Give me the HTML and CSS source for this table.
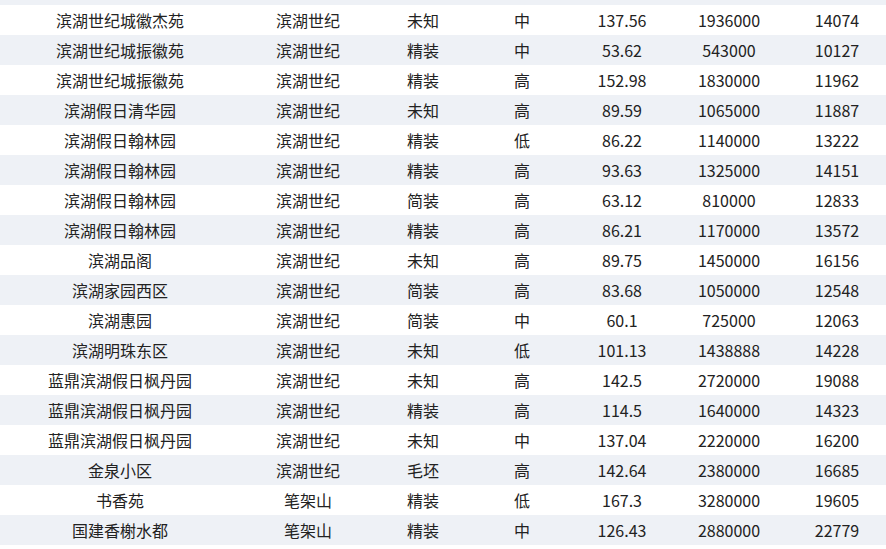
FILE: index.html
```html
<!DOCTYPE html>
<html lang="zh">
<head>
<meta charset="utf-8">
<link rel="stylesheet" href="styles.css">
</head>
<body>
<div class="top-strip"></div>
<table class="data">
<colgroup>
<col class="c1"><col class="c2"><col class="c3"><col class="c4"><col class="c5"><col class="c6"><col class="c7">
</colgroup>
<tbody>
<tr><td>滨湖世纪城徽杰苑</td><td>滨湖世纪</td><td>未知</td><td>中</td><td>137.56</td><td>1936000</td><td>14074</td></tr>
<tr><td>滨湖世纪城振徽苑</td><td>滨湖世纪</td><td>精装</td><td>中</td><td>53.62</td><td>543000</td><td>10127</td></tr>
<tr><td>滨湖世纪城振徽苑</td><td>滨湖世纪</td><td>精装</td><td>高</td><td>152.98</td><td>1830000</td><td>11962</td></tr>
<tr><td>滨湖假日清华园</td><td>滨湖世纪</td><td>未知</td><td>高</td><td>89.59</td><td>1065000</td><td>11887</td></tr>
<tr><td>滨湖假日翰林园</td><td>滨湖世纪</td><td>精装</td><td>低</td><td>86.22</td><td>1140000</td><td>13222</td></tr>
<tr><td>滨湖假日翰林园</td><td>滨湖世纪</td><td>精装</td><td>高</td><td>93.63</td><td>1325000</td><td>14151</td></tr>
<tr><td>滨湖假日翰林园</td><td>滨湖世纪</td><td>简装</td><td>高</td><td>63.12</td><td>810000</td><td>12833</td></tr>
<tr><td>滨湖假日翰林园</td><td>滨湖世纪</td><td>精装</td><td>高</td><td>86.21</td><td>1170000</td><td>13572</td></tr>
<tr><td>滨湖品阁</td><td>滨湖世纪</td><td>未知</td><td>高</td><td>89.75</td><td>1450000</td><td>16156</td></tr>
<tr><td>滨湖家园西区</td><td>滨湖世纪</td><td>简装</td><td>高</td><td>83.68</td><td>1050000</td><td>12548</td></tr>
<tr><td>滨湖惠园</td><td>滨湖世纪</td><td>简装</td><td>中</td><td>60.1</td><td>725000</td><td>12063</td></tr>
<tr><td>滨湖明珠东区</td><td>滨湖世纪</td><td>未知</td><td>低</td><td>101.13</td><td>1438888</td><td>14228</td></tr>
<tr><td>蓝鼎滨湖假日枫丹园</td><td>滨湖世纪</td><td>未知</td><td>高</td><td>142.5</td><td>2720000</td><td>19088</td></tr>
<tr><td>蓝鼎滨湖假日枫丹园</td><td>滨湖世纪</td><td>精装</td><td>高</td><td>114.5</td><td>1640000</td><td>14323</td></tr>
<tr><td>蓝鼎滨湖假日枫丹园</td><td>滨湖世纪</td><td>未知</td><td>中</td><td>137.04</td><td>2220000</td><td>16200</td></tr>
<tr><td>金泉小区</td><td>滨湖世纪</td><td>毛坯</td><td>高</td><td>142.64</td><td>2380000</td><td>16685</td></tr>
<tr><td>书香苑</td><td>笔架山</td><td>精装</td><td>低</td><td>167.3</td><td>3280000</td><td>19605</td></tr>
<tr><td>国建香榭水都</td><td>笔架山</td><td>精装</td><td>中</td><td>126.43</td><td>2880000</td><td>22779</td></tr>
</tbody>
</table>
</body>
</html>
```
FILE: styles.css
```css
html, body {
  margin: 0;
  padding: 0;
  background: #ffffff;
}
body {
  font-family: "Noto Sans CJK SC", "Noto Sans", sans-serif;
  font-size: 16px;
  color: #222222;
  width: 886px;
  overflow: hidden;
}
.top-strip {
  height: 5px;
  background: #eef1f6;
}
.data {
  border-collapse: collapse;
  table-layout: fixed;
  width: 886px;
}
.c1 { width: 240px; }
.c2 { width: 136px; }
.c3 { width: 94px; }
.c4 { width: 104px; }
.c5 { width: 96px; }
.c6 { width: 118px; }
.c7 { width: 98px; }
.data td {
  height: 30px;
  padding: 0;
  text-align: center;
  vertical-align: middle;
  line-height: 30px;
  white-space: nowrap;
}
.data tr:nth-child(even) td {
  background: #eef1f6;
}
```
